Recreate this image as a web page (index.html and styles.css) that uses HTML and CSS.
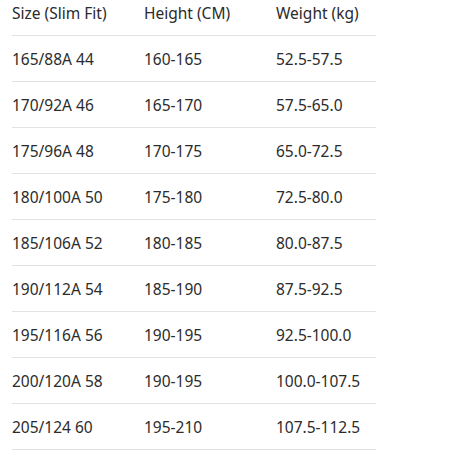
FILE: index.html
```html
<!DOCTYPE html>
<html>
<head>
<meta charset="utf-8">
<link rel="stylesheet" href="styles.css">
</head>
<body>
<div class="size-table">
  <div class="row head"><div>Size (Slim Fit)</div><div>Height (CM)</div><div>Weight (kg)</div></div>
  <div class="row"><div>165/88A 44</div><div>160-165</div><div>52.5-57.5</div></div>
  <div class="row"><div>170/92A 46</div><div>165-170</div><div>57.5-65.0</div></div>
  <div class="row"><div>175/96A 48</div><div>170-175</div><div>65.0-72.5</div></div>
  <div class="row"><div>180/100A 50</div><div>175-180</div><div>72.5-80.0</div></div>
  <div class="row"><div>185/106A 52</div><div>180-185</div><div>80.0-87.5</div></div>
  <div class="row"><div>190/112A 54</div><div>185-190</div><div>87.5-92.5</div></div>
  <div class="row"><div>195/116A 56</div><div>190-195</div><div>92.5-100.0</div></div>
  <div class="row"><div>200/120A 58</div><div>190-195</div><div>100.0-107.5</div></div>
  <div class="row"><div>205/124 60</div><div>195-210</div><div>107.5-112.5</div></div>
</div>
</body>
</html>
```
FILE: styles.css
```css
html, body {
  margin: 0;
  padding: 0;
  background: #ffffff;
}
body {
  font-family: "Noto Sans", "Open Sans", sans-serif;
  font-size: 15.5px;
  color: #2b2b2b;
}
.size-table {
  margin-left: 12px;
  width: 364px;
}
.row {
  display: grid;
  grid-template-columns: 132px 132px 100px;
  height: 45px;
  align-items: center;
  border-bottom: 1px solid #e3e3e3;
  line-height: 22px;
}
.row.head {
  align-items: start;
  padding-top: 2px;
  height: 33px;
}
.row div {
  white-space: nowrap;
}
```
